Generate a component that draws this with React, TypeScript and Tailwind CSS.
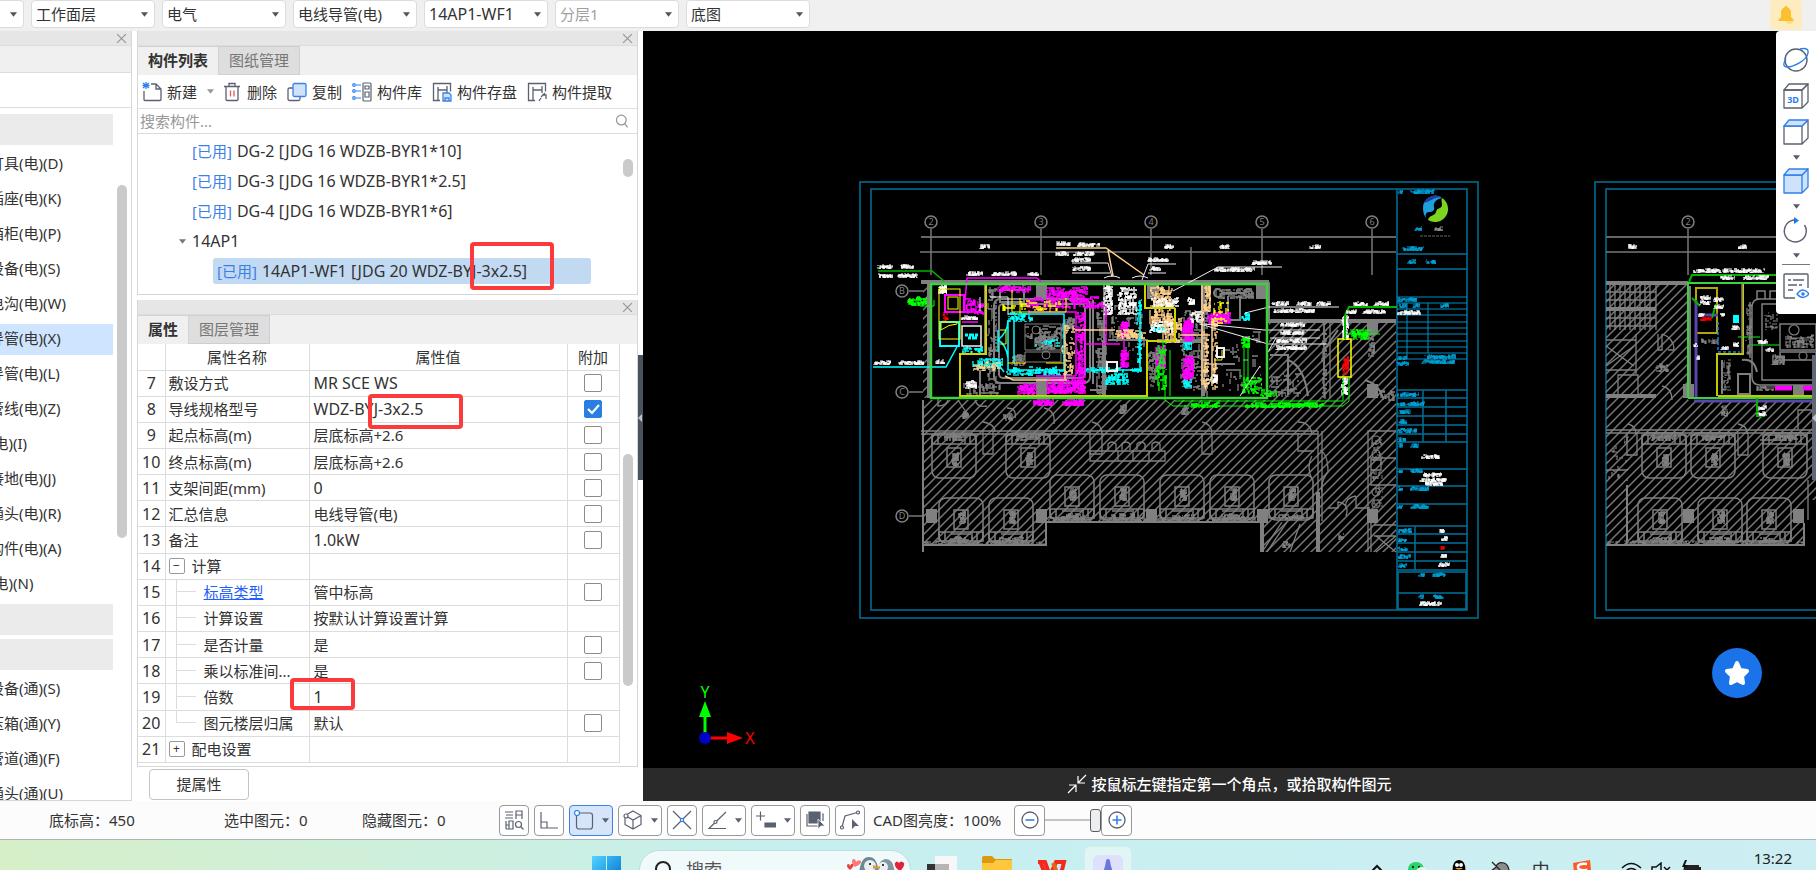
import React from 'react';

const filters = [
  { label: '楼层', value: '' },
  { label: '工作面', value: '工作面层' },
  { label: '专业', value: '电气' },
  { label: '构件类型', value: '电线导管(电)' },
  { label: '构件', value: '14AP1-WF1' },
  { label: '分层', value: '分层1', disabled: true },
  { label: '图层', value: '底图' },
];

interface NavItem {
  text: string;
  kind?: 'group' | 'active';
}

const navItems: NavItem[] = [
  { text: '', kind: 'group' },
  { text: '灯具(电)(D)' },
  { text: '插座(电)(K)' },
  { text: '箱柜(电)(P)' },
  { text: '设备(电)(S)' },
  { text: '电沟(电)(W)' },
  { text: '导管(电)(X)', kind: 'active' },
  { text: '导管(电)(L)' },
  { text: '管线(电)(Z)' },
  { text: '(电)(I)' },
  { text: '接地(电)(J)' },
  { text: '通头(电)(R)' },
  { text: '构件(电)(A)' },
  { text: '(电)(N)' },
  { text: '', kind: 'group' },
  { text: '', kind: 'group' },
  { text: '设备(通)(S)' },
  { text: '压箱(通)(Y)' },
  { text: '管道(通)(F)' },
  { text: '通头(通)(U)' },
];

interface PropertyRow {
  no: number;
  name: string;
  value: string;
  check?: boolean;
  level?: 'group' | 'child' | 'last';
  open?: boolean;
  link?: boolean;
  mark?: 'spec' | 'count';
}

const propertyRows: PropertyRow[] = [
  { no: 7, name: '敷设方式', value: 'MR SCE WS', check: false },
  { no: 8, name: '导线规格型号', value: 'WDZ-BYJ-3x2.5', check: true, mark: 'spec' },
  { no: 9, name: '起点标高(m)', value: '层底标高+2.6', check: false },
  { no: 10, name: '终点标高(m)', value: '层底标高+2.6', check: false },
  { no: 11, name: '支架间距(mm)', value: '0', check: false },
  { no: 12, name: '汇总信息', value: '电线导管(电)', check: false },
  { no: 13, name: '备注', value: '1.0kW', check: false },
  { no: 14, name: '计算', value: '', level: 'group', open: true },
  { no: 15, name: '标高类型', value: '管中标高', check: false, level: 'child', link: true },
  { no: 16, name: '计算设置', value: '按默认计算设置计算', level: 'child' },
  { no: 17, name: '是否计量', value: '是', check: false, level: 'child' },
  { no: 18, name: '乘以标准间...', value: '是', check: false, level: 'child' },
  { no: 19, name: '倍数', value: '1', level: 'child', mark: 'count' },
  { no: 20, name: '图元楼层归属', value: '默认', check: false, level: 'last' },
  { no: 21, name: '配电设置', value: '', level: 'group', open: false },
];

// Latin-only strings are set one step larger than the Chinese ones
const isLatin = (text: string) => /^[\x20-\x7e]+$/.test(text);

function Caret({ className = '' }: { className?: string }) {
  return (
    <svg className={`h-[5px] w-[7px] shrink-0 ${className}`} viewBox="0 0 8 5" fill="currentColor" aria-hidden="true">
      <path d="M0 0h8L4 5z" />
    </svg>
  );
}

function PanelHeader() {
  return (
    <div className="flex h-[15px] shrink-0 items-center justify-end border-b border-[#dcdcdc] bg-[#e6e6e6] pr-1">
      <button aria-label="关闭" className="text-[#999]">
        <svg className="h-[11px] w-[11px]" viewBox="0 0 10 10" stroke="currentColor" strokeWidth="1.2">
          <path d="M1 1l8 8M9 1l-8 8" />
        </svg>
      </button>
    </div>
  );
}

function Tabs({ active, other }: { active: string; other: string }) {
  return (
    <div className="flex h-[29px] shrink-0 bg-[#f0f0f0]" role="tablist">
      <button role="tab" aria-selected="true" className="border border-b-0 border-l-0 border-[#d0d4d8] px-[10px] pb-0.5 font-bold">
        {active}
      </button>
      <button role="tab" aria-selected="false" className="border border-l-0 border-[#cdd0d3] bg-[#dedede] px-[10px] pb-0.5 text-[#777]">
        {other}
      </button>
    </div>
  );
}

function FilterBar() {
  return (
    <div className="flex h-[31px] shrink-0 items-start gap-[7px] overflow-hidden bg-[#f0f0f0]">
      {filters.map((f, i) => (
        <label
          key={f.label}
          className={`relative flex h-7 w-[124px] shrink-0 items-center rounded border border-[#dcdcdc] bg-white ${
            i === 0 ? '-ml-[100px]' : ''
          }`}
        >
          <select
            aria-label={f.label}
            className={`h-full w-full appearance-none bg-transparent pl-1 outline-none ${
              f.disabled ? 'text-[#a0a0a0]' : 'text-[#333]'
            } ${isLatin(f.value) ? 'text-base' : ''}`}
          >
            <option>{f.value}</option>
          </select>
          <Caret className="pointer-events-none absolute right-[6px] text-[#555]" />
        </label>
      ))}
      <button aria-label="通知" className="ml-auto mr-[14px] flex h-[30px] w-8 items-center justify-center rounded bg-[#fdecc0]">
        <svg className="h-[18px] w-[18px]" viewBox="0 0 18 18">
          <path d="M9 0c1 0 1.500.7 1.500 1.500C13 2.300 14 4.500 14 7v4l2.500 2.500V15h-15v-1.500L4 11V7c0-2.500 1-4.700 3.500-5.500C7.500.7 8 0 9 0z" fill="#fbc02d" />
          <path d="M9 15a3.500 3 0 0 0 7 0z" fill="#fcdc84" />
        </svg>
      </button>
    </div>
  );
}

function NavPanel() {
  return (
    <aside className="flex w-[132px] shrink-0 flex-col border-r border-[#d6d6d6] bg-white">
      <PanelHeader />
      <div className="h-[27px] shrink-0 border-b border-[#dcdcdc] bg-[#f0f0f0]" />
      <div className="h-[35px] shrink-0 border-b border-[#dcdcdc]" />
      <div className="flex min-h-0 flex-1 border-b border-[#d6d6d6] pt-[6px]">
        <ul className="flex w-[113px] flex-col gap-1 overflow-hidden">
          {navItems.map((item, i) => (
            <li
              key={i}
              className={`flex h-[31px] shrink-0 items-center pb-[3px] ${
                item.kind === 'group' ? 'bg-[#ebebeb]' : item.kind === 'active' ? 'bg-[#cfe5ff]' : ''
              }`}
            >
              <span className="-ml-[11px] whitespace-nowrap">{item.text}</span>
            </li>
          ))}
        </ul>
        <div className="ml-1 mt-[71px] h-[353px] w-[10px] rounded-full bg-[#cacaca]" />
      </div>
    </aside>
  );
}

const ICON = 'h-5 w-5 shrink-0';

function NewIcon() {
  return (
    <svg className={ICON} viewBox="0 0 20 20" fill="none" strokeWidth="1.3">
      <path d="M9 2h5l5 5v10.500q0 1-1 1H3q-1 0-1-1V9M14 2v5h5" stroke="#5a6170" />
      <path d="M4 0v7M1 1l6 5M7 1L1 6M.5 3.500h7" stroke="#2f80ed" />
    </svg>
  );
}

function TrashIcon() {
  return (
    <svg className={ICON} viewBox="0 0 20 20" fill="none" strokeWidth="1.3">
      <path d="M2 4.500h16M7 4V1.500h6V4M4 4.500v13q0 1 1 1h10q1 0 1-1v-13" stroke="#5a6170" />
      <path d="M8.500 8.500v6M12 8.500v6" stroke="#eb5757" />
    </svg>
  );
}

function CopyIcon() {
  return (
    <svg className={ICON} viewBox="0 0 20 20" strokeWidth="1.3">
      <rect x="1" y="6" width="12" height="12.500" rx="1.500" fill="none" stroke="#5a6170" />
      <rect x="6" y="1.500" width="13" height="13" rx="1.500" fill="#cfe2fb" stroke="#3b82e6" />
    </svg>
  );
}

function LibraryIcon() {
  return (
    <svg className={ICON} viewBox="0 0 20 20" fill="none" strokeWidth="1.2">
      <circle cx="2" cy="3" r="1.300" stroke="#2f80ed" />
      <circle cx="2" cy="9" r="1.300" stroke="#2f80ed" />
      <circle cx="2" cy="16" r="1.300" stroke="#2f80ed" />
      <path d="M4 3h5M4 9h5M4 16h5" stroke="#2f80ed" />
      <rect x="11" y="1" width="8" height="18" rx="1" stroke="#5a6170" />
      <path d="M13 4h4v3h-4zM13 10h4v5h-4z" stroke="#5a6170" />
    </svg>
  );
}

function StoreIcon({ pen }: { pen?: boolean }) {
  return (
    <svg className={ICON} viewBox="0 0 20 20" fill="none" strokeWidth="1.3">
      <path d="M8 18.500H1.500v-17h17v8M6 5v13M6 8h9M15 4v7" stroke="#5a6170" />
      {pen ? (
        <path d="M12 19l2-3M14 15l4-4M15 13h4v4" stroke="#5a6170" />
      ) : (
        <path d="M11 11h6l2 2v6h-8zM13 19v-3h4v3" stroke="#3b82e6" fill="#cfe2fb" />
      )}
    </svg>
  );
}

const componentActions = [
  { text: '删除', icon: <TrashIcon /> },
  { text: '复制', icon: <CopyIcon /> },
  { text: '构件库', icon: <LibraryIcon /> },
  { text: '构件存盘', icon: <StoreIcon /> },
  { text: '构件提取', icon: <StoreIcon pen /> },
];

const RED_FRAME = 'pointer-events-none absolute z-10 rounded-[4px] border-4 border-[#fb3b3b]';

function ComponentPanel() {
  const used = ['DG-2 [JDG 16 WDZB-BYR1*10]', 'DG-3 [JDG 16 WDZB-BYR1*2.5]', 'DG-4 [JDG 16 WDZB-BYR1*6]'];
  return (
    <section className="flex h-[264px] shrink-0 flex-col border border-t-0 border-[#d6d6d6]">
      <PanelHeader />
      <Tabs active="构件列表" other="图纸管理" />
      <div className="flex h-[34px] shrink-0 items-center gap-[10px] border-b border-[#e0e0e0] pl-1">
        <button className="flex items-center gap-[5px]">
          <NewIcon />
          新建
        </button>
        <Caret className="-mr-[2px] text-[#999]" />
        {componentActions.map((a) => (
          <button key={a.text} className="flex items-center gap-[5px] whitespace-nowrap">
            {a.icon}
            {a.text}
          </button>
        ))}
      </div>
      <label className="flex h-[25px] shrink-0 items-center border-b border-[#dcdcdc] pr-2">
        <input placeholder="搜索构件..." aria-label="搜索构件" className="w-full pl-[2px] outline-none placeholder:text-[#999]" />
        <svg className="h-[14px] w-[14px]" viewBox="0 0 14 14" fill="none" stroke="#999" strokeWidth="1.3">
          <circle cx="6.500" cy="6" r="5" />
          <path d="M10 10l3 3.500" />
        </svg>
      </label>
      <div className="flex min-h-0 flex-1">
        <ul className="w-[485px] pt-0.5 text-base leading-5">
          {used.map((u) => (
            <li key={u} className="flex h-[30px] items-center pl-[54px]">
              <span className="mr-[5px] text-[15px] text-[#3b7fe8]">[已用]</span>
              {u}
            </li>
          ))}
          <li className="flex h-[30px] items-center gap-[6px] pl-[41px]">
            <Caret className="text-[#777]" />
            14AP1
          </li>
          <li className="flex h-[30px] items-center pl-[75px]">
            <div className="relative flex h-[26px] w-[378px] items-center rounded-[3px] bg-[#c2d9f2] pl-1">
              <span className="mr-[5px] text-[15px] text-[#3b7fe8]">[已用]</span>
              14AP1-WF1 [JDG 20 WDZ-BYJ-3x2.5]
              <div className={`${RED_FRAME} -top-4 left-[257px] h-12 w-[84px]`} />
            </div>
          </li>
        </ul>
        <div className="mt-[25px] h-[18px] w-[10px] rounded-full bg-[#cacaca]" />
      </div>
    </section>
  );
}

function NameCell({ row }: { row: PropertyRow }) {
  if (row.level === 'group') {
    return (
      <span className="flex items-center gap-[7px]">
        <button
          aria-label={row.open ? '收起' : '展开'}
          className="flex h-4 w-4 items-center justify-center rounded-[2px] border border-[#999] text-xs leading-none"
        >
          {row.open ? '−' : '+'}
        </button>
        {row.name}
      </span>
    );
  }
  if (row.level) {
    return (
      <span className="flex h-[25px] items-center gap-2 pl-[7px]">
        <span className="flex h-full w-5 flex-col">
          <span className="h-1/2 border-b border-l border-[#dcdcdc]" />
          {row.level === 'child' && <span className="h-1/2 border-l border-[#dcdcdc]" />}
        </span>
        <span className={`whitespace-nowrap ${row.link ? 'text-[#1f5eff] underline' : ''}`}>{row.name}</span>
      </span>
    );
  }
  return <span>{row.name}</span>;
}

function PropertyPanel() {
  return (
    <section className="mt-[5px] flex min-h-0 flex-1 flex-col">
      <div className="flex min-h-0 flex-1 flex-col border border-t-0 border-[#d6d6d6]">
        <PanelHeader />
        <Tabs active="属性" other="图层管理" />
        <div className="flex min-h-0 flex-1">
          <div className="w-[481px] pb-[3px]">
            <table className="h-full w-full table-fixed border-collapse leading-5">
              <colgroup>
                <col className="w-[27px]" />
                <col className="w-[144px]" />
                <col className="w-[258px]" />
                <col className="w-[52px]" />
              </colgroup>
              <thead>
                <tr>
                  {['', '属性名称', '属性值', '附加'].map((h) => (
                    <th key={h} className="h-[26px] border-b border-r border-[#dcdcdc] p-0 font-normal">
                      {h}
                    </th>
                  ))}
                </tr>
              </thead>
              <tbody>
                {propertyRows.map((row) => (
                  <tr key={row.no}>
                    <td className="h-[26px] border-b border-r border-[#dcdcdc] p-0 text-center text-base leading-5">{row.no}</td>
                    <td className="border-b border-r border-[#dcdcdc] p-0 pl-[3px]">
                      <NameCell row={row} />
                    </td>
                    <td
                      className={`relative border-b border-r border-[#dcdcdc] p-0 pl-1 ${
                        isLatin(row.value) ? 'text-base leading-5' : ''
                      }`}
                    >
                      {row.value}
                      {row.mark === 'spec' && <div className={`${RED_FRAME} -top-[3px] left-[58px] h-[35px] w-[95px]`} />}
                      {row.mark === 'count' && <div className={`${RED_FRAME} -left-5 -top-[6px] h-8 w-[65px]`} />}
                    </td>
                    <td className="border-b border-r border-[#dcdcdc] p-0">
                      {row.check !== undefined && (
                        <label className="relative mx-auto block h-[18px] w-[18px]">
                          <input
                            type="checkbox"
                            aria-label={`附加${row.name}`}
                            defaultChecked={row.check}
                            className="peer block h-full w-full appearance-none rounded-[2px] border border-[#8c8c8c] checked:border-[#2a7de1] checked:bg-[#2a7de1]"
                          />
                          <svg
                            className="pointer-events-none absolute inset-0 hidden peer-checked:block"
                            viewBox="0 0 18 18"
                            fill="none"
                            stroke="white"
                            strokeWidth="2.200"
                          >
                            <path d="M4 9l4 4 7-8" />
                          </svg>
                        </label>
                      )}
                    </td>
                  </tr>
                ))}
              </tbody>
            </table>
          </div>
          <div className="ml-1 mt-[110px] h-[232px] w-[10px] rounded-full bg-[#cacaca]" />
        </div>
      </div>
      <div className="flex h-[34px] shrink-0 items-center pl-3">
        <button className="h-[31px] w-[100px] rounded border border-[#c4c4c4] bg-white">提属性</button>
      </div>
    </section>
  );
}

// Small deterministic generator, so that the plan looks the same on each render
function scatter(seed: number, x: number, y: number, w: number, h: number, count: number, size: number) {
  let s = seed * 7919 + 17;
  const next = () => {
    s = (s * 1103515245 + 12345) % 2147483648;
    return s / 2147483648;
  };
  let d = '';
  for (let i = 0; i < count; i++) {
    const px = Math.round(x + next() * w);
    const py = Math.round(y + next() * h);
    const len = Math.round(1 + next() * size);
    d += `M${px} ${py}${next() > 0.5 ? `h${Math.min(len, x + w - px + 1)}` : `v${Math.min(len, y + h - py + 1)}`}`;
  }
  return d;
}

type Area = [color: string, x: number, y: number, w: number, h: number, count: number, size: number];

const GRAY = '#808080';
const PINK = '#ff00ff';
const CYAN = '#00ffff';
const TAN = '#ffd08a';
const LIME = '#00ff00';

const areas: Area[] = [
  [GRAY, 988, 286, 8, 108, 90, 7],
  [GRAY, 1096, 300, 10, 94, 110, 8],
  [GRAY, 1148, 350, 8, 36, 60, 5],
  [GRAY, 1201, 286, 6, 110, 90, 7],
  [GRAY, 1215, 288, 38, 10, 60, 7],
  [GRAY, 1222, 330, 38, 60, 50, 7],
  [GRAY, 962, 382, 40, 12, 35, 6],
  [GRAY, 1025, 326, 38, 12, 60, 7],
  [GRAY, 1035, 337, 22, 12, 90, 5],
  [GRAY, 1012, 355, 12, 10, 60, 4],
  [GRAY, 1062, 318, 12, 10, 60, 4],
  [GRAY, 1180, 310, 20, 80, 130, 6],
  [GRAY, 1110, 300, 34, 50, 50, 8],
  [PINK, 965, 298, 18, 16, 60, 4],
  [PINK, 998, 285, 32, 7, 60, 6],
  [PINK, 1047, 287, 40, 10, 100, 7],
  [PINK, 1026, 297, 72, 11, 120, 8],
  [PINK, 1077, 312, 6, 66, 130, 5],
  [PINK, 1083, 302, 20, 5, 24, 5],
  [PINK, 1018, 384, 18, 10, 90, 6],
  [PINK, 1047, 378, 38, 15, 180, 7],
  [PINK, 1208, 313, 22, 10, 110, 6],
  [PINK, 1183, 319, 10, 22, 140, 5],
  [PINK, 1183, 357, 10, 22, 140, 5],
  [PINK, 1120, 321, 8, 16, 90, 4],
  [PINK, 1120, 351, 8, 16, 90, 4],
  [PINK, 1156, 346, 9, 22, 120, 4],
  [PINK, 1033, 400, 20, 5, 80, 5],
  [PINK, 1063, 400, 20, 5, 80, 5],
  [CYAN, 1008, 313, 24, 8, 50, 5],
  [CYAN, 972, 358, 30, 10, 70, 6],
  [CYAN, 1006, 367, 60, 8, 90, 6],
  [CYAN, 1085, 368, 56, 4, 50, 5],
  [CYAN, 1106, 374, 22, 10, 70, 5],
  [CYAN, 1137, 300, 4, 68, 50, 4],
  [CYAN, 1150, 324, 16, 8, 40, 5],
  [CYAN, 1242, 313, 7, 7, 35, 3],
  [CYAN, 1183, 342, 8, 7, 35, 3],
  [CYAN, 1183, 380, 8, 7, 35, 3],
  [CYAN, 1035, 338, 24, 8, 18, 5],
  [CYAN, 962, 347, 20, 5, 30, 5],
  [TAN, 1150, 286, 22, 40, 180, 6],
  [TAN, 1163, 318, 18, 24, 100, 6],
  [TAN, 1204, 285, 6, 26, 60, 5],
  [TAN, 1202, 330, 6, 60, 50, 6],
  [TAN, 1213, 315, 4, 74, 44, 7],
  [TAN, 1115, 330, 30, 8, 60, 6],
  [TAN, 1062, 325, 12, 50, 60, 4],
  [TAN, 972, 362, 28, 8, 35, 5],
  ['#ffffff', 1104, 286, 8, 28, 90, 4],
  ['#ffffff', 1118, 288, 18, 26, 120, 5],
  ['#ffffff', 1150, 298, 28, 8, 50, 6],
  ['#ffffff', 1150, 322, 22, 10, 45, 5],
  ['#ffffff', 966, 380, 10, 8, 40, 3],
  ['#ffffff', 938, 285, 8, 8, 40, 3],
  ['#ffffff', 1191, 312, 12, 10, 40, 4],
  ['#ffffff', 1188, 298, 6, 6, 26, 3],
  ['#ffffff', 1209, 375, 8, 8, 36, 3],
  ['#ffff00', 1000, 300, 60, 10, 30, 8],
  ['#ffff00', 1210, 300, 18, 24, 24, 5],
  ['#ff0000', 943, 312, 5, 8, 20, 3],
  ['#ff0000', 1343, 357, 5, 17, 60, 3],
  [LIME, 908, 297, 18, 8, 60, 5],
  [LIME, 1156, 340, 10, 50, 60, 6],
  [LIME, 1241, 337, 8, 10, 36, 4],
  [LIME, 1241, 375, 20, 18, 60, 5],
  [LIME, 1352, 330, 16, 9, 60, 5],
  [LIME, 1260, 390, 16, 6, 40, 4],
  [LIME, 1190, 403, 30, 4, 50, 5],
  [LIME, 1245, 403, 78, 4, 140, 6],
  ['#ffffff', 1342, 315, 6, 24, 60, 4],
  ['#ffffff', 1341, 378, 6, 16, 40, 4],
  [GRAY, 1369, 326, 5, 30, 50, 5],
  [GRAY, 1270, 374, 30, 22, 40, 7],
  [GRAY, 1322, 322, 4, 76, 50, 6],
  [GRAY, 1378, 390, 16, 10, 25, 5],
  [GRAY, 962, 412, 6, 6, 40, 3],
  [GRAY, 1003, 414, 10, 6, 20, 4],
  [GRAY, 1120, 405, 6, 8, 36, 3],
  [GRAY, 1182, 406, 6, 8, 36, 3],
  [GRAY, 1338, 534, 5, 5, 20, 3],
  [GRAY, 1282, 542, 8, 5, 20, 3],
];

// Drawing notes too small to read: colour, x, y, width
type NoteSpec = [color: string, x: number, y: number, w: number];

const notes: NoteSpec[] = [
  ['#ffffff', 878, 267, 14],
  ['#ffffff', 900, 267, 14],
  ['#ffffff', 878, 276, 14],
  ['#ffffff', 897, 276, 20],
  ['#ffffff', 979, 247, 10],
  ['#ffffff', 967, 274, 16],
  ['#ffffff', 992, 274, 24],
  ['#ffffff', 1028, 274, 10],
  ['#ffffff', 1056, 244, 14],
  ['#ffffff', 1077, 245, 22],
  ['#ffffff', 1056, 254, 12],
  ['#ffffff', 1074, 254, 20],
  ['#ffffff', 1072, 260, 18],
  ['#ffffff', 1072, 269, 18],
  ['#ffffff', 1148, 260, 20],
  ['#ffffff', 1150, 269, 10],
  ['#ffffff', 1164, 247, 10],
  ['#ffffff', 1220, 247, 9],
  ['#ffffff', 1310, 247, 10],
  ['#ffffff', 1251, 263, 20],
  ['#ffffff', 1214, 270, 40],
  ['#ffffff', 1272, 304, 16],
  ['#ffffff', 1297, 304, 14],
  ['#ffffff', 1317, 304, 13],
  ['#ffffff', 1274, 311, 40],
  ['#ffffff', 1280, 325, 24],
  ['#ffffff', 1280, 333, 24],
  ['#ffffff', 1276, 341, 30],
  ['#ffffff', 1274, 348, 32],
  ['#ffffff', 1353, 304, 14],
  ['#ffffff', 1374, 304, 14],
  ['#ffffff', 1346, 312, 10],
  ['#ffffff', 1363, 312, 22],
  ['#ffffff', 874, 363, 16],
  ['#ffffff', 899, 363, 24],
  ['#ffffff', 936, 362, 8],
  ['#ffffff', 961, 318, 16],
  ['#ffffff', 1398, 313, 22],
  ['#ffffff', 1422, 457, 17],
  ['#ffffff', 1423, 475, 18],
  ['#ffffff', 1420, 480, 26],
  ['#ffffff', 1424, 484, 18],
  ['#ffffff', 1439, 531, 5],
  ['#ffffff', 1441, 539, 6],
  ['#ff0000', 1440, 548, 4],
  ['#ffffff', 1440, 556, 6],
  ['#ffffff', 1439, 565, 10],
  ['#ffffff', 1419, 604, 22],
  ['#00a0d8', 1398, 192, 4],
  ['#00a0d8', 1410, 192, 24],
  ['#00a0d8', 1414, 229, 7],
  ['#909090', 1435, 229, 7],
  ['#00a0d8', 1401, 249, 22],
  ['#00a0d8', 1408, 262, 7],
  ['#00a0d8', 1426, 262, 9],
  ['#00a0d8', 1398, 300, 18],
  ['#00a0d8', 1398, 306, 8],
  ['#00a0d8', 1413, 306, 6],
  ['#00a0d8', 1440, 306, 8],
  ['#00a0d8', 1398, 358, 8],
  ['#00a0d8', 1425, 357, 30],
  ['#00a0d8', 1398, 364, 10],
  ['#00a0d8', 1422, 362, 32],
  ['#00a0d8', 1398, 395, 20],
  ['#00a0d8', 1398, 404, 26],
  ['#00a0d8', 1398, 412, 12],
  ['#00a0d8', 1398, 422, 8],
  ['#00a0d8', 1398, 431, 18],
  ['#00a0d8', 1398, 440, 7],
  ['#00a0d8', 1398, 446, 4],
  ['#00a0d8', 1410, 446, 8],
  ['#00a0d8', 1398, 471, 4],
  ['#00a0d8', 1410, 471, 12],
  ['#00a0d8', 1398, 489, 4],
  ['#00a0d8', 1410, 489, 18],
  ['#00a0d8', 1398, 507, 4],
  ['#00a0d8', 1410, 507, 18],
  ['#00a0d8', 1398, 531, 13],
  ['#00a0d8', 1398, 540, 8],
  ['#00a0d8', 1398, 549, 9],
  ['#00a0d8', 1398, 557, 12],
  ['#00a0d8', 1398, 566, 8],
  ['#00a0d8', 1419, 575, 5],
  ['#00a0d8', 1433, 575, 12],
  ['#00a0d8', 1419, 597, 4],
  ['#00a0d8', 1433, 597, 10],
  ['#ffffff', 1627, 247, 9],
  ['#ffffff', 1738, 247, 8],
  ['#ffffff', 1694, 271, 70],
  ['#ffffff', 1720, 278, 14],
  ['#ffffff', 1743, 278, 25],
  ['#ffffff', 1700, 298, 10],
  ['#ffffff', 1700, 303, 10],
  ['#ffffff', 1714, 300, 9],
  ['#ffffff', 1714, 307, 9],
  ['#ffffff', 1699, 315, 5],
  ['#ffffff', 1720, 315, 4],
  ['#ff0000', 1701, 319, 10],
  ['#ffffff', 1732, 328, 7],
  ['#ffffff', 1721, 348, 7],
  ['#ffffff', 1732, 345, 7],
  ['#ffffff', 1757, 342, 10],
  ['#ffffff', 1766, 350, 7],
  ['#ffffff', 1694, 345, 3],
  ['#ffffff', 1696, 358, 3],
  ['#ffffff', 1758, 408, 8],
  ['#ffffff', 1758, 414, 8],
];

function Note({ note }: { note: NoteSpec }) {
  const [color, x, y, w] = note;
  return <path d={scatter(x + y, x, y - 2, w, 3, w * 3, 3)} stroke={color} strokeWidth="1" />;
}

function Bubble({ x, y, text }: { x: number; y: number; text: string }) {
  return (
    <g>
      <circle cx={x} cy={y} r="6" fill="none" stroke={GRAY} strokeWidth="1.500" />
      <text x={x} y={y + 3} fontSize="9" textAnchor="middle" fill={GRAY}>
        {text}
      </text>
    </g>
  );
}

function Bed({ x, y, up }: { x: number; y: number; up?: boolean }) {
  const head = up ? y + 34 : y + 2;
  return (
    <g fill="none" stroke={GRAY} strokeWidth="1.500">
      <rect x={x} y={y} width="44" height="45" rx="7" />
      <rect x={x + 15} y={up ? y + 12 : y + 15} width="14" height="19" />
      <path d={`M${x} ${head}h44v9H${x}zM${x + 6} ${head}v9M${x + 12} ${head + 2}h20M${x + 38} ${head}v9M${x + 33} ${head}v9`} />
      <path d={scatter(x, x + 20, up ? y + 13 : y + 20, 6, 12, 50, 4)} />
      <path d={scatter(x + 3, x + 10, up ? head + 5 : head, 24, 5, 30, 6)} />
    </g>
  );
}

function FloorPlan() {
  return (
    <svg className="h-full w-full" viewBox="643 31 1173 737" preserveAspectRatio="xMinYMin slice" fill="none" aria-label="CAD图纸">
      <defs>
        <pattern id="hatch" width="9" height="9" patternUnits="userSpaceOnUse">
          <path d="M-2 11L11 -2M-2 2L2 -2M7 11L11 7" stroke="#777" strokeWidth="1.500" />
        </pattern>
      </defs>

      {/* sheet frame */}
      <g stroke="#00709a" strokeWidth="1.500">
        <rect x="860" y="182" width="618" height="436" />
        <rect x="871" y="189" width="596" height="421" />
        <path d="M1397 189v421M1397 254h70M1397 269h70M1397 390h70M1397 398h70M1397 407h70M1397 416h70M1397 425h70M1397 434h70M1397 442h70M1423 390v52M1446 390v52M1397 469h70M1397 486h70M1397 504h70M1397 526h70M1397 534h70M1397 543h70M1397 552h70M1397 561h70M1397 570h70M1415 526v44" />
        <rect x="1398" y="572" width="68" height="37" />
        <path d="M1397 593h70M1816 618h-221V182h221M1816 189h-210v421h210" />
      </g>
      <path
        d="M1397 297h70M1397 303h70M1397 309h70M1397 315h70M1397 322h70M1397 328h70M1397 334h70M1397 341h70M1397 347h70M1397 353h70M1397 359h70M1407 303v56M1428 303v50"
        stroke="#008fc4"
      />
      <path d="M1423 208a12 12 0 0 1 19-10c-6 1-9 5-8 9s-2 5-5 5-4 3-3 6q-3-4-3-10z" fill="#1ea0dc" />
      <path d="M1424 203a12 12 0 0 1 17-6c-6 0-10 4-17 6z" fill="#1e3ca0" />
      <path d="M1442 198a12 12 0 0 1-14 22c1-5 7-4 8-8 1-5 6-3 6-7s-1-4 0-7z" fill="#7ed321" />
      <path d="M1420 236h30" stroke="#666" strokeDasharray="3 1" />

      {/* grid lines */}
      <path d="M921 237h475M1606 237h210" stroke="#666" strokeWidth="2" />
      <path
        d="M920 252h476M931 229v46M1041 229v46M1151 229v46M1262 229v46M1372 229v46M1191 247v28M1606 252h210M1688 229v46M909 291h14M909 392h14M909 516h14"
        stroke="#777"
        strokeWidth="1.500"
      />
      <Bubble x={931} y={222} text="2" />
      <Bubble x={1041} y={222} text="3" />
      <Bubble x={1151} y={222} text="4" />
      <Bubble x={1262} y={222} text="5" />
      <Bubble x={1372} y={222} text="6" />
      <Bubble x={902} y={291} text="B" />
      <Bubble x={902} y={392} text="C" />
      <Bubble x={902} y={516} text="D" />
      <Bubble x={1688} y={222} text="2" />

      {/* hatched floor */}
      <path d="M923 400H1269V322H1396V552H1262V522H1046V545H923z" fill="url(#hatch)" />
      <path d="M923 286h6v112h-6z" fill="url(#hatch)" />
      <path d="M1606 283H1688V400H1816V500H1804V545H1606z" fill="url(#hatch)" />

      {/* walls */}
      <g stroke={GRAY} strokeWidth="1.300">
        <path d="M921 282H1269" strokeWidth="4" />
        <path d="M929 282v116M1268 282v40M1268 321h128M1318 552v-60M1262 552v-30M1606 283h82M1606 309h50M1606 396h50" strokeWidth="4" />
        <path d="M923 400v152M923 545h123v-23h216M1606 545h198v-22M1627 485v58" strokeWidth="2" />
        <path d="M921 431h397M921 434h397M1318 431v90M1322 431v90M1606 430h210M1606 433h210M1371 552v-30M1368 552V431h28M1330 322v76M1324 322v76" />
        <path d="M1606 292h50M1606 300h50M1606 318h50M1606 326h50M1610 283v47M1615 283v47M1620 283v47M1625 283v47M1630 283v47M1635 283v47M1640 283v47M1645 283v47M1650 283v47M1656 283v47" />
        <path d="M1606 340h30v30h-30M1606 346l28 20M1606 366l28-20M1618 375h20v20h-20zM1636 334v40M1658 334v16h4v-16M1662 334q12 4 12 16M1674 350h-6M1662 386q10 2 10 14" />
        <path d="M1396 458h-25v27h25M1371 460h10v10h-10zM1376 485h20M1262 552l20-30M1267 552l20-30M1300 524l-10 28M1374 525h22M1374 536h22M1376 552l20-16M1376 536l20 16" />
        <path d="M1328 508h10v-6q12 2 8 14M1356 496v12h14M1346 508q-2-10 10-12M1320 450q8 4 8 22q-8 10-6 20M1312 456q-6 10 0 24" />
        <path d="M1270 355h18v40M1288 360q16 6 20 36M1338 330l-14 20M1365 380q14 4 18 18" strokeWidth="2" />
        <path d="M983 431v23h10v-23M983 422q12 2 12 10M1090 431v23h12v-23M1092 422q10 2 10 12M1202 433v21h10v-21M1202 422q10 2 10 12M1298 433v18h16M1298 422q12 0 14 12" />
        <path d="M1090 451h75v10h-75zM1118 451v10M1133 451v10M1149 451v10M1108 450v-6q4-4 8 0v6M1122 450v-6q4-4 8 0v6M1137 450v-6q4-4 8 0v6M1152 450v-6q4-4 8 0v6" />
        <path d="M938 398v8q8 0 10-6M958 400l8 12M975 400q2 8 12 6M1007 408q10 0 8 10M1044 408q12 2 10 16" />
        <path d="M1627 433v22h10v-22M1628 424q8 2 8 10M1738 433v22h10v-22M1738 424q10 2 9 10M1606 470h22M1760 440h20M1798 430v-20h18M1808 480v40" />
      </g>
      <g stroke={GRAY} strokeWidth="1.200">
        <circle cx="1376" cy="440" r="4" />
        <circle cx="1376" cy="454" r="4" />
        <circle cx="1376" cy="492" r="4" />
        <circle cx="1376" cy="504" r="4" />
        <path d={scatter(5, 1372, 436, 10, 70, 60, 4)} />
        <path d={scatter(6, 1608, 436, 20, 44, 30, 5)} />
        <path d={scatter(7, 923, 541, 122, 3, 80, 6)} />
        <path d={scatter(8, 1048, 518, 212, 3, 130, 6)} />
        <path d={scatter(9, 1608, 541, 194, 3, 120, 6)} />
      </g>
      <g fill={GRAY}>
        <rect x="926" y="509" width="11" height="14" />
        <rect x="1036" y="509" width="11" height="14" />
        <rect x="1146" y="509" width="11" height="14" />
        <rect x="1257" y="509" width="11" height="14" />
        <rect x="1367" y="509" width="11" height="14" />
        <rect x="1367" y="320" width="11" height="14" />
        <rect x="1367" y="384" width="11" height="14" />
        <rect x="1683" y="509" width="11" height="14" />
        <rect x="1793" y="509" width="11" height="14" />
        <rect x="1683" y="384" width="11" height="14" />
        <rect x="1036" y="285" width="11" height="15" />
        <rect x="1036" y="377" width="11" height="18" />
        <rect x="1147" y="285" width="10" height="14" />
        <rect x="1256" y="285" width="10" height="14" />
        <rect x="1793" y="385" width="11" height="12" />
      </g>

      <Bed x={932} y={433} />
      <Bed x={1006} y={433} />
      <Bed x={939} y={498} up />
      <Bed x={989} y={498} up />
      <Bed x={1050} y={475} up />
      <Bed x={1100} y={475} up />
      <Bed x={1160} y={475} up />
      <Bed x={1210} y={475} up />
      <Bed x={1269} y={475} up />
      <Bed x={1642} y={433} />
      <Bed x={1691} y={433} />
      <Bed x={1763} y={433} />
      <Bed x={1638} y={498} up />
      <Bed x={1698} y={498} up />
      <Bed x={1747} y={498} up />

      {/* operating room */}
      <g stroke={GRAY} strokeWidth="2">
        <rect x="994" y="299" width="96" height="84" rx="6" />
        <rect x="999" y="304" width="86" height="74" rx="4" />
        <path d="M985 284v70M1104 284v112M1108 340h40M1205 364h30M960 355v40M980 370v26M1090 390h14M1000 290h24v12h-24zM1093 300v84" />
        <path d="M1025 324h36v26h-36zM1025 352h36v10h-36z" strokeWidth="1" />
        <circle cx="1036" cy="330" r="4" strokeWidth="1" />
        <circle cx="1046" cy="355" r="4" strokeWidth="1" />
        <circle cx="1218" cy="293" r="4" />
        <circle cx="1248" cy="293" r="4" />
        <path d="M1222 293h22M1228 296v24h12v-24" />
        <path d="M1104 340v56M1203 284v112M1157 341h46" strokeWidth="4" />
      </g>
      {areas.map(([color, x, y, w, h, count, size], i) => (
        <path key={i} d={scatter(i + 1, x, y, w, h, count, size)} stroke={color} strokeWidth="1.300" />
      ))}

      <g stroke={PINK} strokeWidth="1.500">
        <rect x="945" y="295" width="19" height="17" strokeWidth="2" />
        <path d="M964 312l3-34h70l4 4M945 312h38M962 322h16M1029 310v4M1030 312h46v64M1076 376h-40M1085 312v66M1106 306v38h14M1085 344h20M1124 340v12" />
      </g>
      <g stroke={CYAN} strokeWidth="1.500">
        <path d="M873 367h73l12-22" />
        <rect x="940" y="322" width="19" height="24" strokeWidth="2" />
        <path d="M1008 320v50h56v-56h-56M1008 320q0 12-10 20q8 4 10 18M1014 320v42M1140 300v70h-50M998 330v22M1064 314v56M1004 372l-6-8" />
        <path d="M965 335h14M968 338h10" strokeWidth="3" strokeDasharray="3 1 5 1" />
      </g>
      <g stroke={TAN} strokeWidth="1.500">
        <path d="M1056 248h50l38 27M1108 250l5 26M1065 325v54M1075 330h40M1005 376l8 4h54M1202 385V285M1212 318v68M1180 335h30" />
      </g>
      <g stroke="#ffff00">
        <path d="M1145 284v24h30M1175 308v33h-28v55H960v-42h26v-70" stroke="#d2d200" strokeWidth="2" />
        <rect x="939" y="289" width="21" height="50" />
        <rect x="948" y="297" width="10" height="12" />
        <path d="M941 330q8-6 16-6v-2h-16zM1012 290v22h54v-14M1020 298v14M1050 300v12M1000 330h6v14h-6M1008 363h18M1046 363h18M1222 350v10h-8" />
        <rect x="1338" y="339" width="13" height="38" strokeWidth="1.500" />
        <path d="M1718 396h98M1717 396v-42h26v-71h73" stroke="#c8c800" strokeWidth="2" />
        <rect x="1696" y="288" width="21" height="45" stroke="#b4a800" strokeWidth="2" />
      </g>
      <g stroke="#f0f0f0">
        <path d="M1072 263h36l4 14M1072 273h38M1176 264h-28l-6 16M1166 273h-18M1282 267h-64l-45 24M1339 307h-70l-24 6M1320 330h-56l-60-6M1320 338h-50M1326 344h-58l-68-20M1240 396l20-30M1268 352l8-14" />
        <rect x="962" y="326" width="19" height="20" strokeWidth="1.500" />
        <rect x="1107" y="362" width="10" height="9" strokeWidth="2" />
        <rect x="1217" y="348" width="7" height="9" strokeWidth="2" />
        <path d="M980 297v14M990 297h18v18M1104 278q8-4 16 0M1132 278q8-4 16 0" />
      </g>
      <g stroke={LIME}>
        <path d="M1397 307h-48l-4 8M1345 315v24" stroke="#00b400" strokeWidth="2" />
        <path d="M878 271h54l12 10" stroke="#00b400" strokeWidth="1.500" />
        <path d="M1349 377v24l-6 5h-170l-8-6v-10M1343 377v24h-168M1346 334h34M1244 340v52M1248 340v52M1350 330h22" />
        <path d="M920 306h14v-6M1163 340v50M1170 350v46" />
      </g>
      <rect x="931" y="284" width="336" height="114" stroke="#3cd23c" strokeWidth="2.500" />

      {/* second sheet */}
      <path d="M1696 300v98M1694 401h122M1698 315h20" stroke="#5a46a8" strokeWidth="3" />
      <path d="M1688 398V283h128M1688 398h128" stroke="#3cd23c" strokeWidth="2" />
      <path d="M1689 282l3-7h84M1692 298l8 8M1716 304l-4 14M1757 398v18h8" stroke="#00b400" strokeWidth="2" />
      <path d="M1738 337h22M1748 345h32" stroke={LIME} />
      <path d="M1718 322v30h22" stroke="#0a84ff" strokeDasharray="3 2" strokeWidth="1.500" />
      <path d="M1733 315h6v8h-6z" fill={CYAN} />
      <path d="M1775 388h17M1803 388h13" stroke={PINK} strokeWidth="5" />
      <g stroke={GRAY} strokeWidth="1.200">
        <path d="M1742 283v70M1750 302v56M1816 299h-56q-8 0-8 8v70q0 8 8 8h56M1816 304h-54v76h54M1757 291h8v8h-8zM1770 291h8v8h-8zM1780 324h36v26h-36zM1780 352h36v8h-36z" strokeWidth="1.500" />
        <path d="M1742 360q12-2 15 12M1738 374h12v20h-12zM1722 360v34M1690 286v110" strokeWidth="2" />
        <circle cx="1794" cy="330" r="5" />
        <circle cx="1803" cy="356" r="4" />
        <path d={scatter(81, 1785, 335, 28, 12, 90, 6)} />
        <path d={scatter(82, 1772, 355, 12, 9, 60, 4)} />
        <path d={scatter(83, 1722, 360, 8, 32, 50, 4)} />
        <path d={scatter(84, 1746, 305, 5, 50, 60, 4)} />
        <path d={scatter(85, 1700, 339, 18, 4, 30, 4)} />
        <path d={scatter(86, 1656, 364, 12, 7, 30, 4)} />
        <path d={scatter(87, 1765, 313, 12, 16, 30, 4)} />
        <path d={scatter(88, 1756, 386, 18, 4, 40, 4)} />
        <path d={scatter(89, 1721, 406, 6, 10, 40, 3)} />
      </g>
      {notes.map((n, i) => (
        <Note key={i} note={n} />
      ))}

      {/* axis marker */}
      <path d="M705 738v-24" stroke="#00ff00" strokeWidth="3" />
      <path d="M705 701l-6 16h12z" fill="#00ff00" />
      <path d="M705 738h24" stroke="#ff0000" strokeWidth="3" />
      <path d="M743 738l-16-6v12z" fill="#ff0000" />
      <circle cx="705" cy="738" r="6" fill="#0000c8" />
      <text x="705" y="698" fontSize="16" textAnchor="middle" fill="#00ff00">
        Y
      </text>
      <text x="750" y="744" fontSize="16" textAnchor="middle" fill="#ff0000">
        X
      </text>
    </svg>
  );
}

function Cube({ top, solid, text }: { top?: boolean; solid?: boolean; text?: string }) {
  const line = solid ? '#2f80ed' : '#5a6170';
  return (
    <svg className="h-[26px] w-[26px]" viewBox="0 0 26 26" fill="none" stroke={line} strokeWidth="1.300" strokeLinejoin="round">
      <path d="M1 7h18v18H1zM19 7l6-6v18l-6 6" fill={solid ? '#cfe2fb' : 'none'} />
      <path d="M1 7l5-6h19l-6 6z" fill={solid || top ? '#cfe2fb' : 'none'} stroke={top ? '#2f80ed' : line} />
      {text && (
        <text x="10" y="20" fontSize="9" fontWeight="700" textAnchor="middle" fill="#2f80ed" stroke="none">
          {text}
        </text>
      )}
    </svg>
  );
}

function ViewTools() {
  return (
    <div className="absolute right-0 top-0 flex h-[283px] w-10 flex-col items-center rounded-l bg-white pt-4 text-[#555c68]">
      <button aria-label="动态观察">
        <svg className="h-[26px] w-[26px]" viewBox="0 0 26 26" fill="none" strokeWidth="1.400">
          <circle cx="13" cy="13" r="11" stroke="#5a6170" />
          <path d="M3 12c-3 4-3 8 1 8 7 0 20-7 21-14 1-5-4-5-8-4" stroke="#2f80ed" />
        </svg>
      </button>
      <button aria-label="三维" className="mt-[10px]">
        <Cube text="3D" />
      </button>
      <button aria-label="俯视" className="mt-[10px]">
        <Cube top />
      </button>
      <Caret className="mt-[10px]" />
      <button aria-label="实体" className="mt-2">
        <Cube solid />
      </button>
      <Caret className="mt-[10px]" />
      <button aria-label="旋转" className="mt-2">
        <svg className="h-[26px] w-[26px]" viewBox="0 0 26 26" fill="none" strokeWidth="1.400">
          <path d="M21.500 8a11 11 0 1 1-9.500-5" stroke="#5a6170" />
          <path d="M11 0v7l5-3.500z" fill="#1d78ee" />
        </svg>
      </button>
      <Caret className="mt-[10px]" />
      <div className="mt-[6px] h-px w-7 bg-[#777]" />
      <button aria-label="显示设置" className="mt-2">
        <svg className="h-[26px] w-[26px]" viewBox="0 0 26 26" fill="none" strokeWidth="1.400">
          <path d="M12 25H2q-1 0-1-1V2q0-1 1-1h22q1 0 1 1v13" stroke="#5a6170" />
          <path d="M5 7h3M10 7h11M5 12h9M16 12h3M5 17h5" stroke="#5a6170" />
          <path d="M14 21q6-8 12 0q-6 7-12 0z" stroke="#2f80ed" />
          <circle cx="20" cy="21" r="1.800" fill="#2f80ed" />
        </svg>
      </button>
    </div>
  );
}

function Canvas() {
  return (
    <main className="relative flex min-w-0 flex-1 flex-col bg-black">
      <div className="min-h-0 flex-1">
        <FloorPlan />
      </div>
      <div className="flex h-[33px] shrink-0 items-center justify-center gap-1 bg-[#2a2a2a] pb-0.5 font-medium text-white">
        <svg className="h-5 w-5" viewBox="0 0 20 20" fill="none" stroke="white" strokeWidth="1.200">
          <path d="M1 19l8-8M2 11h7v7M19 1l-8 8M11 2v7h7" />
        </svg>
        按鼠标左键指定第一个角点，或拾取构件图元
      </div>
      <ViewTools />
      <button
        aria-label="收藏"
        className="absolute bottom-[103px] right-[54px] flex h-[50px] w-[50px] items-center justify-center rounded-full bg-[#1a73e8]"
      >
        <svg className="h-7 w-7" viewBox="0 0 28 28">
          <path
            d="M14 4l3 7 7 1-5 5 1 7-6-3-6 3 1-7-5-5 7-1z"
            fill="white"
            stroke="white"
            strokeWidth="4"
            strokeLinejoin="round"
          />
        </svg>
      </button>
      <div className="absolute -left-[5px] top-[324px] flex h-[125px] w-[5px] items-center bg-[#4a5260] text-[#c0c0c0]">
        <svg className="h-2 w-1" viewBox="0 0 4 8" fill="currentColor">
          <path d="M4 0v8L0 4z" />
        </svg>
      </div>
      <div className="absolute right-0 top-[324px] flex h-[125px] w-1 items-center bg-[#5f6873] text-[#c0c0c0]">
        <svg className="h-2 w-1" viewBox="0 0 4 8" fill="currentColor">
          <path d="M4 0v8L0 4z" />
        </svg>
      </div>
    </main>
  );
}

interface Tool {
  label: string;
  icon: React.ReactNode;
  menu?: boolean;
  active?: boolean;
}

const statusTools: Tool[] = [
  {
    label: '文字查找',
    icon: (
      <>
        <path d="M1 2h8M2 5h7M1 8h8M12 9V1h6v8M12 5h6M2 11v8M2 19h7v-8H5v8M2 15h3" />
        <circle cx="14.500" cy="14.500" r="3" />
        <path d="M17 17l2.500 2.500" />
      </>
    ),
  },
  { label: '正交', icon: <path d="M2 2v16h17M2 12h6v6" /> },
  {
    label: '矩形',
    menu: true,
    active: true,
    icon: (
      <>
        <rect x="2.500" y="3" width="16" height="16" rx="2.500" />
        <circle cx="3" cy="3" r="2.500" stroke="#2f80ed" fill="white" />
      </>
    ),
  },
  {
    label: '三维捕捉',
    menu: true,
    icon: (
      <>
        <path d="M10 1l8 4.500v9L10 19l-8-4.500v-9zM2 5.500L10 10l8-4.500M10 10v9" />
        <circle cx="3" cy="6" r="2" fill="white" />
      </>
    ),
  },
  {
    label: '交点',
    icon: (
      <>
        <path d="M1 1l18 18M19 1L1 19" />
        <circle cx="10" cy="10" r="1.600" stroke="#2f80ed" fill="white" />
      </>
    ),
  },
  {
    label: '角度',
    menu: true,
    icon: (
      <>
        <path d="M19 2L2 18.500h17" />
        <circle cx="8.500" cy="12" r="1.500" fill="white" />
      </>
    ),
  },
  {
    label: '动态输入',
    menu: true,
    icon: (
      <>
        <path d="M0 6h9M4.500 1.500v9" />
        <path d="M9 13h11v4H9z" fill="currentColor" />
      </>
    ),
  },
  {
    label: '选择覆盖',
    icon: (
      <>
        <path d="M4 2h11v11H4z" fill="currentColor" />
        <path d="M2 4v12h11M17 4h1v7" />
        <path d="M13 9l7 7h-4l-3 3z" fill="currentColor" stroke="white" strokeWidth=".7" />
      </>
    ),
  },
  {
    label: '折线选择',
    icon: (
      <>
        <path d="M2 17L5 6l14-4" />
        <circle cx="2" cy="17.500" r="1.500" fill="white" />
        <circle cx="18" cy="2.500" r="1.500" fill="white" />
        <path d="M12 9l7 7h-4l-3 3z" fill="currentColor" stroke="none" />
      </>
    ),
  },
];

function StatusBar() {
  return (
    <div className="flex h-[39px] shrink-0 items-center border-b border-[#a9b7b9] bg-[#fcfcfc]">
      <div className="flex w-[499px] shrink-0 pl-[49px]">
        <span className="w-[175px]">底标高：450</span>
        <span className="w-[138px]">选中图元：0</span>
        <span>隐藏图元：0</span>
      </div>
      <div className="flex gap-[5px]">
        {statusTools.map((t) => (
          <button
            key={t.label}
            aria-label={t.label}
            className={`flex h-[31px] items-center justify-center rounded border text-[#5a6170] ${
              t.menu ? 'w-11 gap-2' : 'w-[30px]'
            } ${t.active ? 'border-[#3b82e6] bg-[#d6e5fa]' : 'border-[#999] bg-white'}`}
          >
            <svg className="h-5 w-5 shrink-0" viewBox="0 0 20 20" fill="none" stroke="currentColor" strokeWidth="1.200">
              {t.icon}
            </svg>
            {t.menu && <Caret />}
          </button>
        ))}
      </div>
      <label htmlFor="brightness" className="ml-2 w-[141px] whitespace-nowrap">
        CAD图亮度：100%
      </label>
      <button aria-label="降低亮度" className="flex h-[31px] w-[31px] items-center justify-center rounded border border-[#999] bg-white">
        <svg className="h-[18px] w-[18px]" viewBox="0 0 18 18" fill="none" strokeWidth="1.300">
          <circle cx="9" cy="9" r="8" stroke="#5a6170" />
          <path d="M4.500 9h9" stroke="#2f80ed" strokeWidth="1.600" />
        </svg>
      </button>
      <input
        id="brightness"
        type="range"
        min="0"
        max="100"
        defaultValue="100"
        className="h-6 w-14 appearance-none bg-[linear-gradient(#c4c4c4,#c4c4c4)] bg-[length:100%_2px] bg-center bg-no-repeat [&::-webkit-slider-thumb]:h-[23px] [&::-webkit-slider-thumb]:w-[11px] [&::-webkit-slider-thumb]:appearance-none [&::-webkit-slider-thumb]:rounded-[3px] [&::-webkit-slider-thumb]:border [&::-webkit-slider-thumb]:border-[#555c68] [&::-webkit-slider-thumb]:bg-[#eee]"
      />
      <button aria-label="提高亮度" className="flex h-[31px] w-[31px] items-center justify-center rounded border border-[#999] bg-white">
        <svg className="h-[18px] w-[18px]" viewBox="0 0 18 18" fill="none" strokeWidth="1.300">
          <circle cx="9" cy="9" r="8" stroke="#5a6170" />
          <path d="M4.500 9h9M9 4.500v9" stroke="#2f80ed" strokeWidth="1.600" />
        </svg>
      </button>
    </div>
  );
}

function Penguins() {
  return (
    <svg className="h-9 w-[60px] shrink-0" viewBox="0 0 60 36">
      <path d="M4 18q-5-4-2-6 2 0 2 2 1-3 3-2 2 2-3 6z" fill="#e84040" />
      <path d="M9 15q-5-5-2-8 3 0 3 3 2-3 5-1 1 3-6 6z" fill="#f77" />
      <path d="M13 32q-1-27 10-27t10 27z" fill="#6d8796" />
      <path d="M31 32q-1-25 9-25t9 25z" fill="#8297a4" />
      <circle cx="24" cy="14" r="6" fill="#e9eef0" />
      <circle cx="37" cy="15" r="5" fill="#e9eef0" />
      <path d="M27 13l5 2-5 2zM34 14l-4 2 4 1z" fill="#e8962e" />
      <circle cx="24" cy="12" r="1" />
      <circle cx="37" cy="13" r="1" />
      <path d="M54 19q-6-4-5-8 2-3 4 0 2-3 5 0 1 4-4 8z" fill="#e3223a" />
    </svg>
  );
}

function Taskbar() {
  return (
    <footer className="h-[30px] shrink-0 overflow-hidden bg-linear-to-r from-[#d6efc8] via-[#c6eff0] via-45% to-[#cdeef2]">
      <div className="flex h-[60px] items-center">
        <button aria-label="开始" className="ml-[592px] grid h-[29px] w-[29px] shrink-0 grid-cols-2 gap-px">
          <span className="bg-linear-to-br from-[#55d3fb] to-[#23a5ea]" />
          <span className="bg-linear-to-br from-[#38b6f3] to-[#1585d8]" />
          <span className="bg-[#1b95e0]" />
          <span className="bg-[#0a74cf]" />
        </button>
        <label className="ml-[18px] flex h-10 w-[272px] shrink-0 items-center gap-[14px] rounded-full border border-[#c2dcde] bg-[#f0fafa] pl-[14px] pr-1">
          <svg className="h-[18px] w-[18px] shrink-0" viewBox="0 0 18 18" fill="none" stroke="#222" strokeWidth="2">
            <circle cx="9" cy="8" r="7" />
            <path d="M4 13l-3 5" />
          </svg>
          <input placeholder="搜索" aria-label="搜索" className="w-full min-w-0 text-lg outline-none placeholder:text-[#555]" />
          <Penguins />
        </label>
        <svg className="ml-4 h-[30px] w-[31px] shrink-0" viewBox="0 0 31 30">
          <rect x="8" y="1" width="22" height="20" fill="#f7f7f7" />
          <rect x="0" y="9" width="22" height="20" fill="#333" />
          <rect x="8" y="9" width="14" height="12" fill="#b5b5b5" />
        </svg>
        <svg className="ml-6 h-[30px] w-[31px] shrink-0" viewBox="0 0 31 30">
          <path d="M0 3q0-2 2-2h8l3 3h17v6H0z" fill="#dc9a10" />
          <path d="M0 8h11l3-3h16v24H0z" fill="#ffc83c" />
        </svg>
        <svg className="ml-6 h-6 w-[31px] shrink-0" viewBox="0 0 31 24" fill="none" stroke="#f5281e" strokeWidth="4">
          <path d="M1 4h7l5 14 6-14h8l-4 16M3 3l7 18" />
          <path d="M16 5l5 12" stroke="#e8641e" />
        </svg>
        <div className="ml-4 flex h-12 w-12 shrink-0 items-center justify-center rounded-md border border-[#d4eeee] bg-[#e2f5f5]">
          <svg className="h-[30px] w-[30px]" viewBox="0 0 30 30" fill="none">
            <rect width="30" height="30" rx="6" fill="#dfe0fb" />
            <path d="M7 24q6-4 8-18 1 9 6 16" stroke="#6a78dc" strokeWidth="4" strokeLinejoin="round" />
          </svg>
        </div>
        <div className="ml-auto flex shrink-0 items-center gap-[21px]">
          <svg className="h-4 w-5" viewBox="0 0 20 16" fill="none" stroke="#111" strokeWidth="2">
            <path d="M5 9l5-5 5 5" />
          </svg>
          <svg className="h-[18px] w-5" viewBox="0 0 20 18">
            <ellipse cx="8" cy="8" rx="8" ry="7" fill="#2bd46b" />
            <circle cx="5" cy="6" r="1" />
            <circle cx="11" cy="6" r="1" />
            <ellipse cx="14" cy="11" rx="6" ry="5" fill="#eee" />
          </svg>
          <svg className="h-5 w-5" viewBox="0 0 20 20">
            <path d="M4 16Q2 0 10 0t6 16z" />
            <circle cx="8" cy="5" r="2" fill="white" />
            <circle cx="12" cy="5" r="2" fill="white" />
            <path d="M6 8q4 3 8 0z" fill="#f5a623" />
            <path d="M3 11q7 4 14 0v3q-7 3-14 0z" fill="#e02020" />
          </svg>
          <svg className="h-[18px] w-5" viewBox="0 0 20 18" fill="#8c8c8c" stroke="#222" strokeWidth="1.300">
            <path d="M3 15q-4-5 2-8 3-7 9-5 6 2 5 13zM2 1l16 16" />
          </svg>
          <span className="w-5 text-center text-lg leading-none">中</span>
          <svg className="h-5 w-5" viewBox="0 0 20 20">
            <path d="M1 3l17-3 2 20H3z" fill="#fa5a28" />
            <path d="M15 4q-9-1-9 3t8 3q0 5-8 4" fill="none" stroke="white" strokeWidth="2.500" />
          </svg>
        </div>
        <div className="ml-[29px] flex shrink-0 items-center gap-[9px]">
          <svg className="h-4 w-[21px]" viewBox="0 0 21 16" fill="none" stroke="#111" strokeWidth="1.600">
            <path d="M1 6q9-9 19 0M4 10q6-7 13 0M7 13q3-4 7 0" />
          </svg>
          <svg className="h-4 w-[21px]" viewBox="0 0 21 16" fill="none" stroke="#111" strokeWidth="1.500">
            <path d="M10 1L5 5H1v6h4l5 4zM13 5l6 6M19 5l-6 6" />
          </svg>
          <svg className="h-5 w-[21px]" viewBox="0 0 21 20">
            <path d="M6 5h12v2h2v6h-2v2H4V9z" fill="#222" />
            <path d="M4 0L1 7h2L2 12l5-7H4l2-5z" fill="#111" />
          </svg>
        </div>
        <time className="ml-[52px] mr-6 shrink-0 pb-6 text-[#222]">13:22</time>
      </div>
    </footer>
  );
}

export default function App() {
  return (
    <div className="flex h-screen flex-col overflow-hidden bg-white font-['Noto_Sans','Noto_Sans_CJK_SC',sans-serif] text-[15px] leading-5 text-[#333]">
      <FilterBar />
      <div className="flex min-h-0 flex-1">
        <NavPanel />
        <div className="mx-[5px] flex w-[501px] shrink-0 flex-col">
          <ComponentPanel />
          <PropertyPanel />
        </div>
        <Canvas />
      </div>
      <StatusBar />
      <Taskbar />
    </div>
  );
}
